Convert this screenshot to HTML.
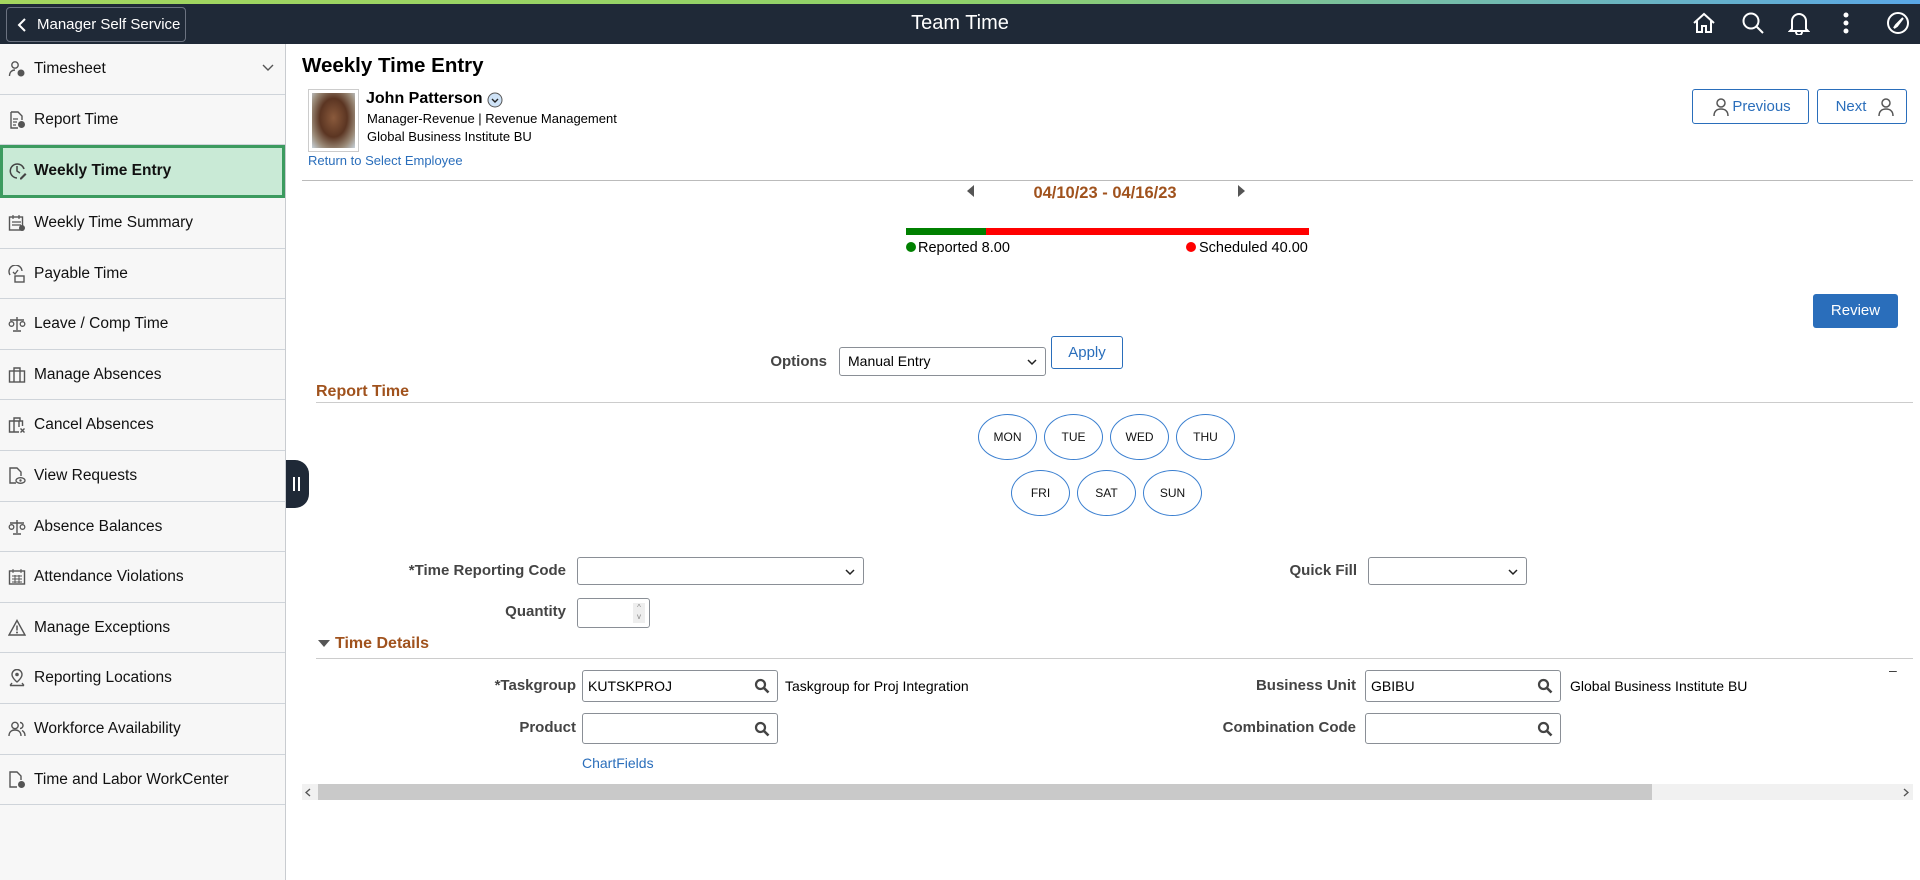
<!DOCTYPE html>
<html><head><meta charset="utf-8"><style>
*{box-sizing:border-box;margin:0;padding:0}
body{width:1920px;height:880px;overflow:hidden;background:#fff;font-family:"Liberation Sans",Arial,sans-serif;color:#000;position:relative}
.a{position:absolute}
.hdr{left:0;top:0;width:1920px;height:44px;background:#1f2937}
.stripe{left:0;top:0;width:1920px;height:4px;background:linear-gradient(90deg,#a4d65e,#8fd16a 50%,#5aa7e6)}
.msb{left:6px;top:7px;width:180px;height:35px;border:1px solid #6b7280;border-radius:4px;color:#fff;font-size:15px;line-height:33px;padding-left:30px}
.side{left:0;top:44px;width:286px;height:836px;background:#f7f7f7;border-right:1px solid #c9ccd0}
.it{left:0;width:285px;height:50.6px;border-bottom:1px solid #cfd4da;font-size:15.5px;line-height:50px;padding-left:34px;color:#111}
.it svg{position:absolute;left:8px;top:16px}
.sel{background:#c9ead6;border:3px solid #3c9b5f;font-weight:bold;line-height:45px;padding-left:31px}
.lbl{font-size:15px;font-weight:bold;color:#444;text-align:right}
.inp{border:1px solid #8a8f96;border-radius:3px;background:#fff}
.btn{border:1px solid #2a6ebb;border-radius:3px;color:#2a6ebb;font-size:15px;text-align:center;background:#fff}
.day{width:59px;height:46px;border:1px solid #3a7fd0;border-radius:50%;font-size:12px;text-align:center;line-height:44px;color:#111}
.sec{color:#a0521d;font-weight:bold;font-size:16px}
.mag{position:absolute;right:7px;top:7px}
</style></head><body>
<div class="a hdr"></div><div class="a stripe"></div>
<div class="a msb"><svg class="a" style="left:10px;top:10px" width="10" height="14" viewBox="0 0 10 14"><path d="M8 1L2 7l6 6" stroke="#fff" stroke-width="2" fill="none"/></svg>Manager Self Service</div>
<div class="a" style="left:0;width:1920px;top:12px;text-align:center;color:#fff;font-size:20px">Team Time</div>
<svg class="a" style="left:1692px;top:12px" width="24" height="22" viewBox="0 0 24 22"><path d="M2 11L12 2l10 9M5 9v11h5v-6h4v6h5V9" stroke="#fff" stroke-width="2" fill="none"/></svg>
<svg class="a" style="left:1741px;top:11px" width="24" height="24" viewBox="0 0 24 24"><circle cx="10" cy="10" r="7.5" stroke="#fff" stroke-width="2" fill="none"/><path d="M15.5 15.5L22 22" stroke="#fff" stroke-width="2"/></svg>
<svg class="a" style="left:1788px;top:11px" width="22" height="24" viewBox="0 0 22 24"><path d="M4 18V10a7 7 0 0114 0v8l2 2H2z" stroke="#fff" stroke-width="2" fill="none"/><path d="M8 21a3 3 0 006 0" stroke="#fff" stroke-width="2" fill="none"/></svg>
<svg class="a" style="left:1843px;top:12px" width="6" height="22" viewBox="0 0 6 22"><circle cx="3" cy="3" r="2.5" fill="#fff"/><circle cx="3" cy="11" r="2.5" fill="#fff"/><circle cx="3" cy="19" r="2.5" fill="#fff"/></svg>
<svg class="a" style="left:1886px;top:11px" width="24" height="24" viewBox="0 0 24 24"><circle cx="12" cy="12" r="10" stroke="#fff" stroke-width="2" fill="none"/><path d="M17 7l-7 7-2 3 3-2 6-8" stroke="#fff" stroke-width="2" fill="none"/></svg>

<div class="a side"></div>
<div class="a it" style="top:44px"><svg width="18" height="18" viewBox="0 0 18 18"><circle cx="7" cy="5" r="3.2" stroke="#555" stroke-width="1.4" fill="none"/><path d="M1.5 16c0-4 2.5-6 5.5-6" stroke="#555" stroke-width="1.4" fill="none"/><circle cx="13" cy="13" r="3.5" fill="#555"/></svg>Timesheet<svg style="left:262px;top:20px" width="12" height="8" viewBox="0 0 12 8"><path d="M1 1l5 5 5-5" stroke="#555" stroke-width="1.4" fill="none"/></svg></div>
<div class="a it" style="top:94.6px"><svg width="18" height="18" viewBox="0 0 18 18"><path d="M3 1h7l4 4v4M3 1v16h7" stroke="#555" stroke-width="1.4" fill="none"/><path d="M5 8h5M5 11h4M5 14h3" stroke="#555" stroke-width="1.3"/><circle cx="13.5" cy="13.5" r="3.5" fill="#555"/></svg>Report Time</div>
<div class="a it sel" style="top:145px;height:53px"><svg style="left:6px;top:14px" width="18" height="18" viewBox="0 0 18 18"><path d="M15 7A7 7 0 108 16" stroke="#444" stroke-width="1.5" fill="none"/><path d="M8 4v5l3 2" stroke="#444" stroke-width="1.5" fill="none"/><path d="M11 16l5-5 1.5 1.5-5 5H11z" fill="#444"/></svg>Weekly Time Entry</div>
<div class="a it" style="top:198px"><svg width="18" height="18" viewBox="0 0 18 18"><rect x="1.5" y="3" width="13" height="13" stroke="#555" stroke-width="1.4" fill="none"/><path d="M5 1v4M11 1v4M4 8h9M4 11h9" stroke="#555" stroke-width="1.2"/><circle cx="14" cy="14" r="3" fill="#555"/></svg>Weekly Time Summary</div>
<div class="a it" style="top:248.6px"><svg width="18" height="18" viewBox="0 0 18 18"><path d="M14 6A6.5 6.5 0 102 10" stroke="#555" stroke-width="1.4" fill="none"/><path d="M5 7l2 2 3-4" stroke="#555" stroke-width="1.3" fill="none"/><rect x="7" y="11" width="9" height="6" stroke="#555" stroke-width="1.4" fill="none"/></svg>Payable Time</div>
<div class="a it" style="top:299.2px"><svg width="18" height="18" viewBox="0 0 18 18"><path d="M9 2v13M5 16h8M2 5h14" stroke="#555" stroke-width="1.4"/><circle cx="3.5" cy="9" r="2.3" stroke="#555" stroke-width="1.3" fill="none"/><circle cx="14.5" cy="9" r="2.3" stroke="#555" stroke-width="1.3" fill="none"/></svg>Leave / Comp Time</div>
<div class="a it" style="top:349.8px"><svg width="18" height="18" viewBox="0 0 18 18"><rect x="1.5" y="5" width="15" height="11" stroke="#555" stroke-width="1.4" fill="none"/><path d="M6 5V2h6v3M6 5v11M12 5v11" stroke="#555" stroke-width="1.4" fill="none"/></svg>Manage Absences</div>
<div class="a it" style="top:400.4px"><svg width="18" height="18" viewBox="0 0 18 18"><path d="M11 16H1.5V5h13v5M6 5V2h6v3M6 5v11M11 5v6" stroke="#555" stroke-width="1.4" fill="none"/><path d="M12.5 12.5l4 4M16.5 12.5l-4 4" stroke="#555" stroke-width="1.4"/></svg>Cancel Absences</div>
<div class="a it" style="top:451px"><svg width="18" height="18" viewBox="0 0 18 18"><path d="M8 16H2V1h7l4 4v4" stroke="#555" stroke-width="1.4" fill="none"/><ellipse cx="12.5" cy="13.5" rx="4.5" ry="2.8" stroke="#555" stroke-width="1.3" fill="none"/><circle cx="12.5" cy="13.5" r="1.2" fill="#555"/></svg>View Requests</div>
<div class="a it" style="top:501.6px"><svg width="18" height="18" viewBox="0 0 18 18"><path d="M9 2v13M5 16h8M2 5h14" stroke="#555" stroke-width="1.4"/><circle cx="3.5" cy="9" r="2.3" stroke="#555" stroke-width="1.3" fill="none"/><circle cx="14.5" cy="9" r="2.3" stroke="#555" stroke-width="1.3" fill="none"/></svg>Absence Balances</div>
<div class="a it" style="top:552.2px"><svg width="18" height="18" viewBox="0 0 18 18"><rect x="1.5" y="3" width="15" height="13" stroke="#555" stroke-width="1.4" fill="none"/><path d="M5 1v4M13 1v4M4 8h10M4 11h10M4 14h10M7 7v8M11 7v8" stroke="#555" stroke-width="1"/></svg>Attendance Violations</div>
<div class="a it" style="top:602.8px"><svg width="18" height="18" viewBox="0 0 18 18"><path d="M9 1.5L17 16H1z" stroke="#555" stroke-width="1.4" fill="none"/><path d="M9 6.5v5" stroke="#555" stroke-width="1.5"/><circle cx="9" cy="13.5" r="1" fill="#555"/></svg>Manage Exceptions</div>
<div class="a it" style="top:653.4px"><svg width="18" height="18" viewBox="0 0 18 18"><path d="M9 13s-5-4-5-7.5a5 5 0 0110 0C14 9 9 13 9 13z" stroke="#555" stroke-width="1.4" fill="none"/><circle cx="9" cy="5.5" r="1.8" fill="#555"/><path d="M2 16.5h14M4 14l-2 2.5M14 14l2 2.5" stroke="#555" stroke-width="1.4"/></svg>Reporting Locations</div>
<div class="a it" style="top:704px"><svg width="18" height="18" viewBox="0 0 18 18"><circle cx="7" cy="5.5" r="3.2" stroke="#555" stroke-width="1.4" fill="none"/><path d="M1 16c0-4 2.5-6 6-6s6 2 6 6M12 2.5a3 3 0 010 6M14 10.5c2 1 3 3 3 5.5" stroke="#555" stroke-width="1.4" fill="none"/></svg>Workforce Availability</div>
<div class="a it" style="top:754.6px"><svg width="18" height="18" viewBox="0 0 18 18"><path d="M9 16H2V1h7l4 4v4" stroke="#555" stroke-width="1.4" fill="none"/><circle cx="13.5" cy="13.5" r="3.5" fill="#555"/></svg>Time and Labor WorkCenter</div>
<div class="a" style="left:286px;top:460px;width:23px;height:48px;background:#1f2937;border-radius:0 14px 14px 0"><div class="a" style="left:7px;top:17px;width:2px;height:14px;background:#fff"></div><div class="a" style="left:12px;top:17px;width:2px;height:14px;background:#fff"></div></div>

<div class="a" style="left:302px;top:54px;font-size:20.5px;font-weight:bold">Weekly Time Entry</div>
<div class="a" style="left:308px;top:89px;width:51px;height:63px;border:1px solid #ccc;padding:3px;background:#fff"><div style="width:100%;height:100%;background:radial-gradient(ellipse at 50% 45%,#8a5a3c 0,#5b3522 45%,#9a8a78 75%,#c8d3dc 100%)"></div></div>
<div class="a" style="left:366px;top:90px;font-size:16px;font-weight:bold">John Patterson</div>
<svg class="a" style="left:487px;top:92px" width="16" height="16" viewBox="0 0 16 16"><circle cx="8" cy="8" r="7" fill="#cfe3f7" stroke="#555" stroke-width="1"/><path d="M5 7l3 3 3-3" stroke="#222" stroke-width="1.4" fill="none"/></svg>
<div class="a" style="left:367px;top:111px;font-size:13px">Manager-Revenue | Revenue Management</div>
<div class="a" style="left:367px;top:129px;font-size:13px">Global Business Institute BU</div>
<div class="a" style="left:308px;top:153px;font-size:13px;color:#2a6ebb">Return to Select Employee</div>
<div class="a btn" style="left:1692px;top:89px;width:117px;height:35px;line-height:33px;padding-left:22px"><svg class="a" style="left:20px;top:8px" width="16" height="18" viewBox="0 0 16 18"><circle cx="8" cy="5" r="4" stroke="#555" stroke-width="1.5" fill="none"/><path d="M1 18c0-5 3-7 7-7s7 2 7 7" stroke="#555" stroke-width="1.5" fill="none"/></svg>Previous</div>
<div class="a btn" style="left:1817px;top:89px;width:90px;height:35px;line-height:33px;padding-right:22px">Next<svg class="a" style="left:60px;top:8px" width="16" height="18" viewBox="0 0 16 18"><circle cx="8" cy="5" r="4" stroke="#555" stroke-width="1.5" fill="none"/><path d="M1 18c0-5 3-7 7-7s7 2 7 7" stroke="#555" stroke-width="1.5" fill="none"/></svg></div>
<div class="a" style="left:302px;top:180px;width:1611px;height:1px;background:#bbb"></div>

<svg class="a" style="left:967px;top:185px" width="8" height="12"><path d="M7 0v12L0 6z" fill="#555"/></svg>
<div class="a" style="left:1000px;top:184px;width:210px;text-align:center;font-size:16.5px;font-weight:bold;color:#a0521d">04/10/23 - 04/16/23</div>
<svg class="a" style="left:1238px;top:185px" width="8" height="12"><path d="M0 0v12l7-6z" fill="#555"/></svg>
<div class="a" style="left:906px;top:228px;width:403px;height:7px;background:#f00"></div>
<div class="a" style="left:906px;top:228px;width:80px;height:7px;background:#008000"></div>
<div class="a" style="left:906px;top:240px;font-size:14.5px"><span style="display:inline-block;width:10px;height:10px;border-radius:50%;background:#008000;margin-right:2px"></span>Reported 8.00</div>
<div class="a" style="left:1186px;top:240px;font-size:14.5px"><span style="display:inline-block;width:10px;height:10px;border-radius:50%;background:#f00;margin-right:3px"></span>Scheduled 40.00</div>

<div class="a" style="left:1813px;top:294px;width:85px;height:34px;background:#2a6ebb;border-radius:3px;color:#fff;font-size:15px;line-height:34px;text-align:center">Review</div>
<div class="a lbl" style="left:727px;top:353px;width:100px">Options</div>
<div class="a inp" style="left:839px;top:347px;width:207px;height:29px;font-size:14px;line-height:27px;padding-left:8px">Manual Entry<svg class="a" style="right:8px;top:11px" width="10" height="7"><path d="M1 1l4 4 4-4" stroke="#222" stroke-width="1.5" fill="none"/></svg></div>
<div class="a btn" style="left:1051px;top:336px;width:72px;height:33px;line-height:31px">Apply</div>
<div class="a sec" style="left:316px;top:383px">Report Time</div>
<div class="a" style="left:316px;top:402px;width:1597px;height:1px;background:#ccc"></div>
<div class="a day" style="left:978px;top:414px">MON</div>
<div class="a day" style="left:1044px;top:414px">TUE</div>
<div class="a day" style="left:1110px;top:414px">WED</div>
<div class="a day" style="left:1176px;top:414px">THU</div>
<div class="a day" style="left:1011px;top:470px">FRI</div>
<div class="a day" style="left:1077px;top:470px">SAT</div>
<div class="a day" style="left:1143px;top:470px">SUN</div>

<div class="a lbl" style="left:346px;top:562px;width:220px">*Time Reporting Code</div>
<div class="a inp" style="left:577px;top:557px;width:287px;height:28px"><svg class="a" style="right:8px;top:11px" width="10" height="7"><path d="M1 1l4 4 4-4" stroke="#222" stroke-width="1.5" fill="none"/></svg></div>
<div class="a lbl" style="left:1207px;top:562px;width:150px">Quick Fill</div>
<div class="a inp" style="left:1368px;top:557px;width:159px;height:28px"><svg class="a" style="right:8px;top:11px" width="10" height="7"><path d="M1 1l4 4 4-4" stroke="#222" stroke-width="1.5" fill="none"/></svg></div>
<div class="a lbl" style="left:466px;top:603px;width:100px">Quantity</div>
<div class="a inp" style="left:577px;top:598px;width:73px;height:30px"><div class="a" style="right:4px;top:4px;width:12px;height:20px;background:#eee;font-size:8px;color:#888;text-align:center;line-height:9px">^<br>v</div></div>

<svg class="a" style="left:318px;top:640px" width="12" height="8"><path d="M0 0h12L6 7z" fill="#555"/></svg>
<div class="a sec" style="left:335px;top:635px">Time Details</div>
<div class="a" style="left:316px;top:658px;width:1597px;height:1px;background:#ccc"></div>
<div class="a" style="left:1889px;top:662px;font-size:14px;color:#333">–</div>

<div class="a lbl" style="left:426px;top:677px;width:150px">*Taskgroup</div>
<div class="a inp" style="left:582px;top:670px;width:196px;height:32px;font-size:14px;line-height:30px;padding-left:5px">KUTSKPROJ<svg class="mag" width="16" height="16" viewBox="0 0 16 16"><circle cx="6.5" cy="6.5" r="4.5" stroke="#444" stroke-width="2.2" fill="none"/><path d="M10 10l4.5 4.5" stroke="#444" stroke-width="2.6"/></svg></div>
<div class="a" style="left:785px;top:678px;font-size:14px">Taskgroup for Proj Integration</div>
<div class="a lbl" style="left:426px;top:719px;width:150px">Product</div>
<div class="a inp" style="left:582px;top:713px;width:196px;height:31px"><svg class="mag" width="16" height="16" viewBox="0 0 16 16"><circle cx="6.5" cy="6.5" r="4.5" stroke="#444" stroke-width="2.2" fill="none"/><path d="M10 10l4.5 4.5" stroke="#444" stroke-width="2.6"/></svg></div>
<div class="a" style="left:582px;top:755px;font-size:14px;color:#2a6ebb">ChartFields</div>

<div class="a lbl" style="left:1156px;top:677px;width:200px">Business Unit</div>
<div class="a inp" style="left:1365px;top:670px;width:196px;height:32px;font-size:14px;line-height:30px;padding-left:5px">GBIBU<svg class="mag" width="16" height="16" viewBox="0 0 16 16"><circle cx="6.5" cy="6.5" r="4.5" stroke="#444" stroke-width="2.2" fill="none"/><path d="M10 10l4.5 4.5" stroke="#444" stroke-width="2.6"/></svg></div>
<div class="a" style="left:1570px;top:678px;font-size:14px">Global Business Institute BU</div>
<div class="a lbl" style="left:1156px;top:719px;width:200px">Combination Code</div>
<div class="a inp" style="left:1365px;top:713px;width:196px;height:31px"><svg class="mag" width="16" height="16" viewBox="0 0 16 16"><circle cx="6.5" cy="6.5" r="4.5" stroke="#444" stroke-width="2.2" fill="none"/><path d="M10 10l4.5 4.5" stroke="#444" stroke-width="2.6"/></svg></div>

<div class="a" style="left:302px;top:784px;width:1611px;height:16px;background:#f1f1f1"></div>
<div class="a" style="left:318px;top:784px;width:1334px;height:16px;background:#c9c9c9"></div>
<svg class="a" style="left:305px;top:788px" width="6" height="9"><path d="M5 1L1 4.5 5 8" stroke="#555" stroke-width="1.4" fill="none"/></svg>
<svg class="a" style="left:1903px;top:788px" width="6" height="9"><path d="M1 1l4 3.5L1 8" stroke="#555" stroke-width="1.4" fill="none"/></svg>
</body></html>
